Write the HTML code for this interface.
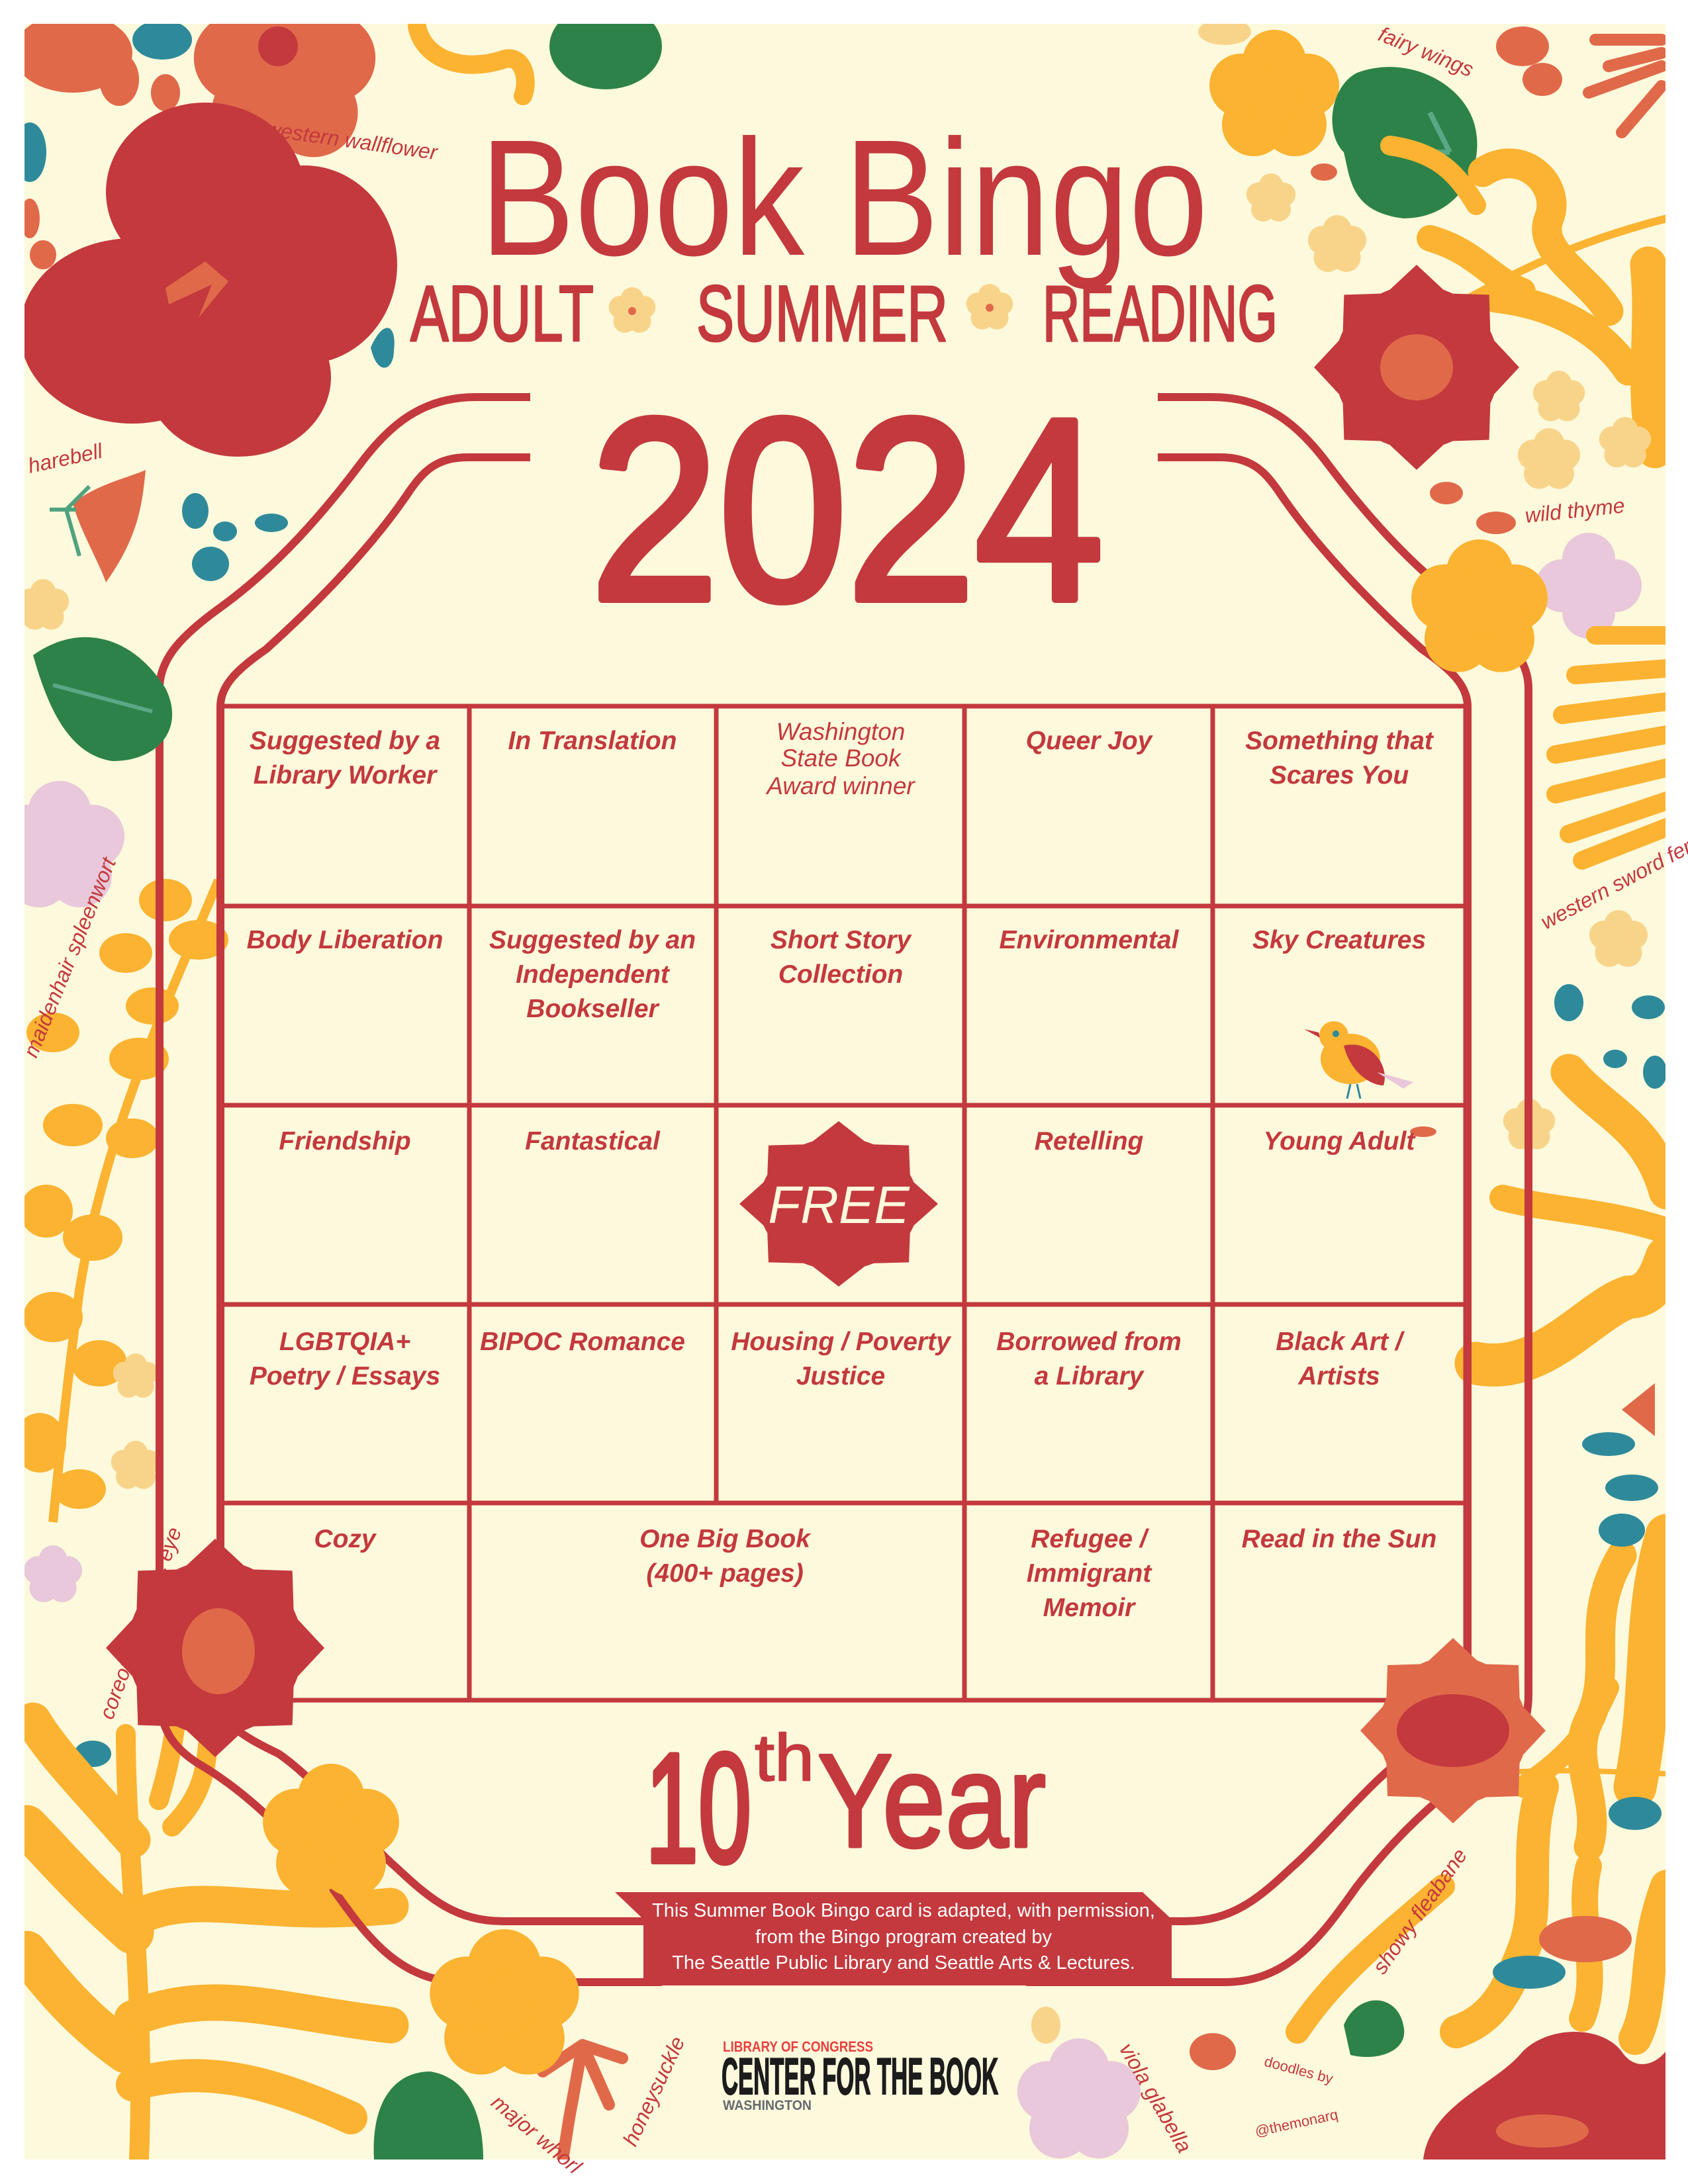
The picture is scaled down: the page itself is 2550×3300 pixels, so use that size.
<!DOCTYPE html>
<html><head><meta charset="utf-8">
<style>
html,body{margin:0;padding:0;background:#fff;}
svg{display:block;}
</style></head>
<body>
<svg xmlns="http://www.w3.org/2000/svg" width="2550" height="3300" viewBox="0 0 2550 3300">
<defs>
  <clipPath id="pg"><rect x="37" y="36" width="2479" height="3227"/></clipPath>
  <g id="p5">
    <circle cx="0" cy="-0.52" r="0.48"/>
    <circle cx="0.5" cy="-0.16" r="0.48"/>
    <circle cx="0.31" cy="0.43" r="0.48"/>
    <circle cx="-0.31" cy="0.43" r="0.48"/>
    <circle cx="-0.5" cy="-0.16" r="0.48"/>
    <circle cx="0" cy="0" r="0.4"/>
  </g>
  <g id="p4">
    <circle cx="0" cy="-0.5" r="0.5"/>
    <circle cx="0.5" cy="0" r="0.5"/>
    <circle cx="0" cy="0.5" r="0.5"/>
    <circle cx="-0.5" cy="0" r="0.5"/>
  </g>
  <g id="daisy">
    <polygon points="1,0 .72,.30 .707,.707 .30,.72 0,1 -.30,.72 -.707,.707 -.72,.30 -1,0 -.72,-.30 -.707,-.707 -.30,-.72 0,-1 .30,-.72 .707,-.707 .72,-.30"/>
    <circle r="0.8"/>
  </g>
</defs>

<rect x="0" y="0" width="2550" height="3300" fill="#ffffff"/>
<rect x="37" y="36" width="2479" height="3227" fill="#fdf9dc"/>

<g clip-path="url(#pg)">
  <use href="#p5" transform="translate(430,110) scale(140)" fill="#e0694a"/>
  <circle cx="420" cy="70" r="30" fill="#c3393d"/>
  <ellipse cx="110" cy="80" rx="90" ry="60" fill="#e0694a"/>
  <ellipse cx="180" cy="120" rx="30" ry="40" fill="#e0694a"/>
  <ellipse cx="245" cy="60" rx="45" ry="30" fill="#2e8a9a"/>
  <ellipse cx="250" cy="140" rx="22" ry="28" fill="#e0694a"/>
  <ellipse cx="45" cy="230" rx="25" ry="45" fill="#2e8a9a"/>
  <ellipse cx="45" cy="330" rx="15" ry="30" fill="#e0694a"/>
  <ellipse cx="65" cy="385" rx="20" ry="22" fill="#e0694a"/>
  <g fill="#c3393d">
    <ellipse cx="310" cy="290" rx="150" ry="135"/>
    <ellipse cx="460" cy="400" rx="140" ry="150"/>
    <ellipse cx="200" cy="500" rx="170" ry="140"/>
    <ellipse cx="360" cy="570" rx="140" ry="120"/>
    <circle cx="320" cy="420" r="140"/>
  </g>
  <polygon points="250,435 310,395 345,425 300,480 320,430 255,460" fill="#e0694a"/>
  <path d="M560,525 C580,480 600,490 595,530 C595,560 570,570 560,525Z" fill="#2e8a9a"/>
  <path d="M630,40 C640,90 700,110 760,90 C790,80 800,120 790,145" stroke="#fbb331" stroke-width="28" fill="none" stroke-linecap="round"/>
  <ellipse cx="915" cy="70" rx="85" ry="65" fill="#2d8249"/>
  <path d="M110,760 C150,730 200,720 220,710 C215,760 210,810 160,880 C150,850 120,800 110,760Z" fill="#e0694a"/>
  <path d="M75,770 L115,770 M100,770 L120,840 M100,770 L135,735" stroke="#4fa37f" stroke-width="6" fill="none"/>
  <g fill="#2e8a9a">
    <ellipse cx="295" cy="772" rx="20" ry="27"/><ellipse cx="340" cy="803" rx="18" ry="15"/>
    <ellipse cx="410" cy="790" rx="25" ry="14"/><ellipse cx="318" cy="852" rx="28" ry="26"/>
  </g>
  <use href="#p5" transform="translate(65,915) scale(40)" fill="#f8d48a"/>
  <use href="#p5" transform="translate(90,1280) scale(100)" fill="#e8c8da"/>
  <path d="M330,1330 C260,1500 160,1700 120,1950 C100,2100 90,2200 80,2300" stroke="#fbb331" stroke-width="14" fill="none"/>
  <g fill="#fbb331">
    <ellipse cx="250" cy="1360" rx="40" ry="32"/><ellipse cx="300" cy="1420" rx="45" ry="30"/>
    <ellipse cx="190" cy="1440" rx="40" ry="30"/><ellipse cx="230" cy="1520" rx="40" ry="28"/>
    <ellipse cx="210" cy="1600" rx="45" ry="32"/><ellipse cx="80" cy="1560" rx="40" ry="30"/>
    <ellipse cx="110" cy="1700" rx="45" ry="32"/><ellipse cx="200" cy="1720" rx="40" ry="30"/>
    <ellipse cx="70" cy="1830" rx="40" ry="40"/><ellipse cx="140" cy="1870" rx="45" ry="35"/>
    <ellipse cx="80" cy="1990" rx="45" ry="38"/><ellipse cx="150" cy="2060" rx="42" ry="35"/>
    <ellipse cx="60" cy="2180" rx="40" ry="45"/><ellipse cx="120" cy="2250" rx="40" ry="30"/>
  </g>
  <use href="#p5" transform="translate(205,2080) scale(35)" fill="#f8d48a"/>
  <use href="#p5" transform="translate(205,2215) scale(38)" fill="#f8d48a"/>
  <use href="#p5" transform="translate(80,2380) scale(45)" fill="#e8c8da"/>
  <ellipse cx="140" cy="2650" rx="28" ry="20" fill="#2e8a9a"/>
  <g stroke="#fbb331" fill="none" stroke-linecap="round">
    <path d="M210,3263 C220,3000 190,2800 190,2620" stroke-width="30"/>
    <path d="M200,2900 C300,2850 380,2900 590,2880" stroke-width="55"/>
    <path d="M200,3050 C320,3000 420,3040 590,3060" stroke-width="55"/>
    <path d="M200,3150 C300,3120 400,3140 530,3200" stroke-width="50"/>
    <path d="M200,2780 C130,2700 80,2650 50,2600" stroke-width="55"/>
    <path d="M200,2920 C120,2850 80,2800 40,2760" stroke-width="65"/>
    <path d="M190,3100 C120,3050 80,3000 40,2950" stroke-width="65"/>
    <path d="M240,2720 C270,2620 280,2520 260,2410" stroke-width="30"/>
    <path d="M260,2760 C320,2700 310,2650 320,2580" stroke-width="30"/>
  </g>
  <path d="M565,3263 C560,3170 600,3130 650,3130 C710,3140 730,3200 730,3263Z" fill="#2d8249"/>
  <g stroke="#e0694a" stroke-width="18" fill="none" stroke-linecap="round">
    <path d="M880,3090 L860,3200 M880,3090 L920,3180 M880,3090 L940,3110 M880,3090 L820,3130 M860,3200 L850,3263"/>
  </g>
  <use href="#p5" transform="translate(1925,145) scale(100)" fill="#fbb331"/>
  <ellipse cx="1850" cy="48" rx="40" ry="20" fill="#f8d48a"/>
  <path d="M2050,110 C2130,80 2220,130 2230,200 C2240,260 2200,330 2120,330 C2040,320 2040,270 2030,230 C2000,200 2010,130 2050,110Z" fill="#2d8249"/>
  <path d="M2100,230 L2190,230 M2160,170 L2190,230" stroke="#5aa887" stroke-width="8" fill="none"/>
  <use href="#p5" transform="translate(1920,300) scale(38)" fill="#f8d48a"/>
  <use href="#p5" transform="translate(2020,370) scale(45)" fill="#f8d48a"/>
  <ellipse cx="2000" cy="260" rx="20" ry="13" fill="#e0694a"/>
  <ellipse cx="2300" cy="70" rx="40" ry="30" fill="#e0694a"/>
  <ellipse cx="2330" cy="120" rx="30" ry="25" fill="#e0694a"/>
  <g stroke="#e0694a" stroke-width="18" fill="none" stroke-linecap="round">
    <path d="M2510,60 L2410,60 M2510,100 L2400,140 M2510,130 L2450,200 M2510,80 L2430,100"/>
  </g>
  <g stroke="#fbb331" fill="none" stroke-linecap="round">
    <path d="M2240,260 C2300,220 2360,280 2340,330 C2320,380 2400,420 2430,470" stroke-width="45"/>
    <path d="M2150,490 C2300,400 2400,360 2518,330" stroke-width="12"/>
    <path d="M2160,360 C2230,380 2250,420 2300,440" stroke-width="40"/>
    <path d="M2260,450 C2350,460 2420,500 2460,560" stroke-width="45"/>
    <path d="M2490,400 C2500,500 2480,580 2500,680" stroke-width="55"/>
    <path d="M2230,310 C2200,260 2170,230 2100,220" stroke-width="30"/>
  </g>
  <use href="#daisy" transform="translate(2140,555) scale(155)" fill="#c3393d"/>
  <ellipse cx="2140" cy="555" rx="55" ry="50" fill="#e0694a"/>
  <use href="#p5" transform="translate(2355,600) scale(40)" fill="#f8d48a"/>
  <use href="#p5" transform="translate(2340,695) scale(48)" fill="#f8d48a"/>
  <use href="#p5" transform="translate(2455,670) scale(40)" fill="#f8d48a"/>
  <ellipse cx="2185" cy="745" rx="25" ry="17" fill="#e0694a"/>
  <ellipse cx="2260" cy="790" rx="30" ry="17" fill="#e0694a"/>
  <use href="#p4" transform="translate(2400,885) scale(80)" fill="#e8c8da"/>
  <g stroke="#fbb331" stroke-width="28" fill="none" stroke-linecap="round">
    <path d="M2518,960 L2410,960 M2518,1010 L2380,1020 M2518,1060 L2360,1080 M2518,1110 L2350,1140 M2518,1160 L2350,1200 M2518,1210 L2370,1260 M2518,1250 L2390,1300"/>
  </g>
  <use href="#p5" transform="translate(2445,1420) scale(45)" fill="#f8d48a"/>
  <g fill="#2e8a9a">
    <ellipse cx="2370" cy="1515" rx="22" ry="28"/><ellipse cx="2490" cy="1522" rx="25" ry="18"/>
    <ellipse cx="2440" cy="1600" rx="18" ry="14"/><ellipse cx="2500" cy="1620" rx="18" ry="25"/>
  </g>
  <use href="#p5" transform="translate(2310,1700) scale(40)" fill="#f8d48a"/>
  <g stroke="#fbb331" fill="none" stroke-linecap="round">
    <path d="M2370,1620 C2420,1680 2490,1700 2518,1800" stroke-width="55"/>
    <path d="M2270,1810 C2350,1830 2430,1830 2518,1860" stroke-width="40"/>
    <path d="M2230,2060 C2330,2080 2400,1980 2460,1960 C2500,1960 2510,1920 2518,1900" stroke-width="65"/>
    <path d="M2450,2350 C2390,2450 2440,2520 2400,2600 C2370,2660 2420,2720 2400,2790" stroke-width="45"/>
    <path d="M2518,2320 C2480,2450 2500,2550 2470,2700" stroke-width="65"/>
    <path d="M2300,2700 C2360,2660 2400,2620 2430,2550" stroke-width="32"/>
    <path d="M2230,2680 C2400,2670 2460,2680 2518,2680" stroke-width="8"/>
    <path d="M2330,2700 C2300,2800 2330,2880 2300,2950 C2280,3000 2260,3050 2200,3070" stroke-width="50"/>
    <path d="M2400,2820 C2380,2900 2420,2980 2390,3050" stroke-width="40"/>
    <path d="M2518,2850 C2480,2950 2500,3020 2470,3080" stroke-width="50"/>
    <path d="M2180,2850 C2100,2920 2020,2980 1960,3070" stroke-width="36"/>
  </g>
  <ellipse cx="2150" cy="1710" rx="20" ry="8" fill="#e0694a"/>
  <path d="M2500,2090 L2450,2130 L2500,2170Z" fill="#e0694a"/>
  <g fill="#2e8a9a">
    <ellipse cx="2430" cy="2182" rx="40" ry="18"/><ellipse cx="2465" cy="2248" rx="40" ry="20"/>
    <ellipse cx="2450" cy="2312" rx="35" ry="25"/><ellipse cx="2470" cy="2740" rx="40" ry="25"/>
    <ellipse cx="2310" cy="2980" rx="55" ry="25"/>
  </g>
  <ellipse cx="2395" cy="2930" rx="70" ry="35" fill="#e0694a"/>
  <path d="M2030,3060 C2050,3010 2110,3010 2120,3060 C2130,3100 2080,3115 2040,3105Z" fill="#2d8249"/>
  <ellipse cx="1832" cy="3100" rx="35" ry="28" fill="#e0694a"/>
  <path d="M2150,3263 C2160,3180 2260,3150 2300,3100 C2340,3060 2420,3060 2450,3100 C2470,3130 2500,3120 2516,3100 V3263Z" fill="#c3393d"/>
  <ellipse cx="2330" cy="3220" rx="70" ry="25" fill="#e0694a"/>
  <use href="#p5" transform="translate(1630,3175) scale(95)" fill="#e8c8da"/>
  <ellipse cx="1580" cy="3060" rx="22" ry="28" fill="#f8d48a"/>
</g>

<g fill="none" stroke="#c3393d" stroke-width="12">
  <g id="fr">
    <path d="M801,600 H718 C640,600 590,640 545,700 C470,800 400,870 330,920 C275,960 241,995 241,1040 V2560 C241,2610 260,2640 300,2665 C360,2700 430,2760 500,2850 C550,2920 600,2995 700,2995 H1000"/>
    <path d="M801,691 H706 C660,691 640,712 620,740 C560,830 470,920 402,981 C360,1010 333,1035 333,1067 V2569 C333,2605 370,2625 421,2650 C480,2690 550,2780 600,2823 C650,2870 690,2903 760,2903 H1000"/>
  </g>
  <use href="#fr" transform="translate(2550,0) scale(-1,1)"/>
</g>

<g stroke="#c3393d" stroke-width="7" fill="none">
  <rect x="333" y="1067" width="1881" height="1502"/>
  <line x1="709" y1="1067" x2="709" y2="2569"/>
  <line x1="1082" y1="1067" x2="1082" y2="2271"/>
  <line x1="1457" y1="1067" x2="1457" y2="2569"/>
  <line x1="1832" y1="1067" x2="1832" y2="2569"/>
  <line x1="333" y1="1369" x2="2214" y2="1369"/>
  <line x1="333" y1="1670" x2="2214" y2="1670"/>
  <line x1="333" y1="1971" x2="2214" y2="1971"/>
  <line x1="333" y1="2271" x2="2214" y2="2271"/>
</g>

<use href="#daisy" transform="translate(325,2490) scale(165)" fill="#c3393d"/>
<ellipse cx="330" cy="2495" rx="55" ry="65" fill="#e0694a"/>
<use href="#p5" transform="translate(500,2770) scale(105)" fill="#fbb331"/>
<use href="#p5" transform="translate(762,3030) scale(115)" fill="#fbb331"/>
<use href="#p5" transform="translate(2235,920) scale(105)" fill="#fbb331"/>
<use href="#daisy" transform="translate(2195,2615) scale(140)" fill="#e0694a"/>
<ellipse cx="2195" cy="2615" rx="85" ry="55" fill="#c3393d"/>
<path d="M50,990 C120,940 200,960 250,1040 C280,1100 240,1150 170,1150 C100,1140 70,1060 50,990Z" fill="#2d8249"/>
<path d="M80,1035 L230,1075" stroke="#5aa887" stroke-width="6"/>

<use href="#daisy" transform="translate(1267,1819) scale(150,125)" fill="#c3393d"/>
<text x="1267" y="1848" text-anchor="middle" font-family="Liberation Sans, sans-serif" font-style="italic" font-size="80" fill="#fdf9dc">FREE</text>

<g transform="translate(2040,1600)">
  <ellipse cx="0" cy="0" rx="45" ry="38" fill="#fbb331"/>
  <circle cx="-25" cy="-35" r="22" fill="#fbb331"/>
  <path d="M-48,-40 L-70,-45 L-46,-32Z" fill="#c3393d"/>
  <circle cx="-22" cy="-38" r="5" fill="#2e8a9a"/>
  <path d="M-10,-20 C30,-30 60,10 50,40 C30,40 0,20 -10,-20Z" fill="#c3393d"/>
  <path d="M40,20 L95,35 L80,45Z" fill="#e8c8da"/>
  <path d="M0,38 L-5,60 M10,38 L15,60" stroke="#2e8a9a" stroke-width="3"/>
</g>

<g font-family="Liberation Sans, sans-serif" font-weight="bold" font-style="italic" font-size="39" fill="#c3393d" text-anchor="middle">
  <text x="521" y="1132">Suggested by a</text><text x="521" y="1184">Library Worker</text>
  <text x="895" y="1132">In Translation</text>
  <text x="1645" y="1132">Queer Joy</text>
  <text x="2023" y="1132">Something that</text><text x="2023" y="1184">Scares You</text>
  <text x="521" y="1433">Body Liberation</text>
  <text x="895" y="1433">Suggested by an</text><text x="895" y="1485">Independent</text><text x="895" y="1537">Bookseller</text>
  <text x="1270" y="1433">Short Story</text><text x="1270" y="1485">Collection</text>
  <text x="1645" y="1433">Environmental</text>
  <text x="2023" y="1433">Sky Creatures</text>
  <text x="521" y="1737">Friendship</text>
  <text x="895" y="1737">Fantastical</text>
  <text x="1645" y="1737">Retelling</text>
  <text x="2023" y="1737">Young Adult</text>
  <text x="521" y="2040">LGBTQIA+</text><text x="521" y="2092">Poetry / Essays</text>
  <text x="880" y="2040">BIPOC Romance</text>
  <text x="1270" y="2040">Housing / Poverty</text><text x="1270" y="2092">Justice</text>
  <text x="1645" y="2040">Borrowed from</text><text x="1645" y="2092">a Library</text>
  <text x="2023" y="2040">Black Art /</text><text x="2023" y="2092">Artists</text>
  <text x="521" y="2338">Cozy</text>
  <text x="1095" y="2338">One Big Book</text><text x="1095" y="2390">(400+ pages)</text>
  <text x="1645" y="2338">Refugee /</text><text x="1645" y="2390">Immigrant</text><text x="1645" y="2442">Memoir</text>
  <text x="2023" y="2338">Read in the Sun</text>
</g>
<g font-family="Liberation Sans, sans-serif" font-style="italic" font-size="37" fill="#c3393d" text-anchor="middle">
  <text x="1270" y="1118">Washington</text><text x="1270" y="1158">State Book</text><text x="1270" y="1200">Award winner</text>
</g>

<g font-family="Liberation Sans, sans-serif" fill="#c3393d" stroke="#c3393d" stroke-linejoin="round">
  <text x="725" y="385" font-size="250" stroke-width="0" textLength="1100" lengthAdjust="spacingAndGlyphs">Book Bingo</text>
  <text x="620" y="515" font-size="120" stroke-width="3" textLength="277" lengthAdjust="spacingAndGlyphs">ADULT</text>
  <text x="1052" y="515" font-size="120" stroke-width="3" textLength="380" lengthAdjust="spacingAndGlyphs">SUMMER</text>
  <text x="1575" y="515" font-size="120" stroke-width="3" textLength="355" lengthAdjust="spacingAndGlyphs">READING</text>
  <text x="892" y="905" font-size="390" stroke-width="12" textLength="775" lengthAdjust="spacingAndGlyphs">2024</text>
  <text x="975" y="2813" font-size="235" stroke-width="8" textLength="160" lengthAdjust="spacingAndGlyphs">10</text>
  <text x="1140" y="2690" font-size="100" stroke-width="2" textLength="90" lengthAdjust="spacingAndGlyphs">th</text>
  <text x="1235" y="2790" font-size="200" stroke-width="5" textLength="345" lengthAdjust="spacingAndGlyphs">Year</text>
</g>
<use href="#p5" transform="translate(955,470) scale(36)" fill="#f8d48a"/>
<circle cx="955" cy="470" r="6" fill="#e0694a"/>
<use href="#p5" transform="translate(1495,465) scale(36)" fill="#f8d48a"/>
<circle cx="1495" cy="465" r="6" fill="#e0694a"/>

<polygon points="929,2859 1726,2859 1770,2900 1770,3000 972,3000 972,2900" fill="#c3393d"/>
<g font-family="Liberation Sans Narrow, Liberation Sans, sans-serif" font-size="29" fill="#ffffff" text-anchor="middle">
  <text x="1365" y="2896" textLength="760" lengthAdjust="spacingAndGlyphs">This Summer Book Bingo card is adapted, with permission,</text>
  <text x="1365" y="2936">from the Bingo program created by</text>
  <text x="1365" y="2975">The Seattle Public Library and Seattle Arts &amp; Lectures.</text>
</g>

<text x="1092" y="3100" font-family="Liberation Sans, sans-serif" font-weight="bold" font-size="22" fill="#e8403f" textLength="227" lengthAdjust="spacingAndGlyphs">LIBRARY OF CONGRESS</text>
<text x="1090" y="3164" font-family="Liberation Sans Narrow, Liberation Sans, sans-serif" font-weight="bold" font-size="78" fill="#1c1c1c" stroke="#1c1c1c" stroke-width="2" textLength="418" lengthAdjust="spacingAndGlyphs">CENTER FOR THE BOOK</text>
<text x="1092" y="3188" font-family="Liberation Sans, sans-serif" font-weight="bold" font-size="21" fill="#666a70" textLength="134" lengthAdjust="spacingAndGlyphs">WASHINGTON</text>

<g font-family="Liberation Sans, sans-serif" font-style="italic" font-size="32" fill="#c3393d">
  <text transform="translate(400,205) rotate(8)">western wallflower</text>
  <text transform="translate(45,715) rotate(-12)">harebell</text>
  <text transform="translate(2080,60) rotate(22)">fairy wings</text>
  <text transform="translate(2305,790) rotate(-6)">wild thyme</text>
  <text transform="translate(2335,1405) rotate(-28)">western sword fern</text>
  <text transform="translate(55,1600) rotate(-68)">maidenhair spleenwort</text>
  <text transform="translate(170,2600) rotate(-70)">coreopsis cosmic eye</text>
  <text transform="translate(2090,2985) rotate(-55)">showy fleabane</text>
  <text transform="translate(740,3180) rotate(40)">major whorl</text>
  <text transform="translate(960,3245) rotate(-65)">honeysuckle</text>
  <text transform="translate(1690,3095) rotate(60)">viola glabella</text>
</g>
<g font-family="Liberation Sans, sans-serif" font-size="22" fill="#c3393d" text-anchor="middle">
  <text transform="translate(1960,3135) rotate(15)">doodles by</text>
  <text transform="translate(1960,3215) rotate(-12)">@themonarq</text>
</g>
</svg>
</body></html>
